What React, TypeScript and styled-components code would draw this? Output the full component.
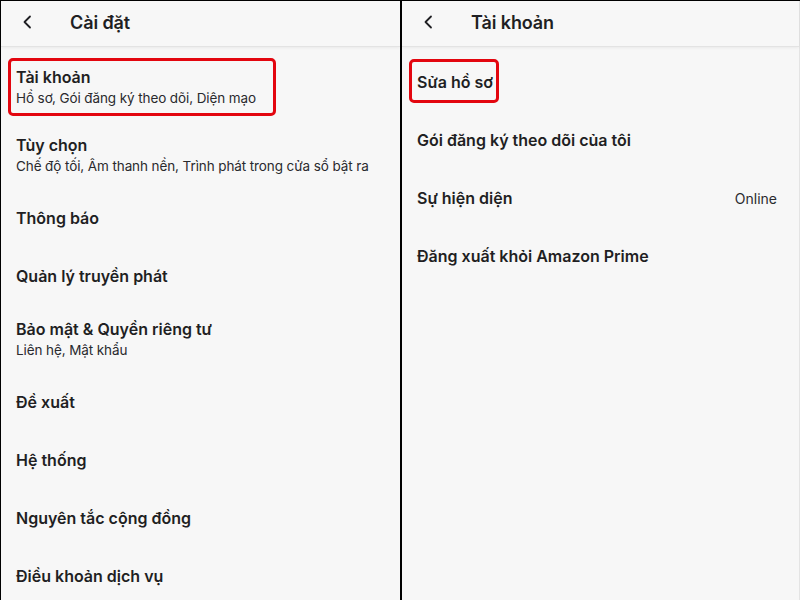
import styled, { createGlobalStyle } from 'styled-components';

const GlobalStyle = createGlobalStyle`
  html, body {
    margin: 0;
    padding: 0;
    background: #f7f7f7;
  }
  * {
    box-sizing: border-box;
  }
`;

const Frame = styled.div`
  display: grid;
  grid-template-columns: 402px 398px;
  width: 800px;
  height: 600px;
  border-top: 1px solid #000;
  background: #f7f7f7;
  font-family: Inter, "Noto Sans", sans-serif;
  color: #1f1f23;
  overflow: hidden;
`;

const Panel = styled.div<{ $left?: boolean }>`
  display: flex;
  flex-direction: column;
  min-width: 0;
  border-left: ${(p) => (p.$left ? '1px solid #000' : 'none')};
  border-right: ${(p) => (p.$left ? '2px solid #000' : '1px solid #e4e4e4')};
  border-bottom: ${(p) => (p.$left ? '2px solid #000' : 'none')};
`;

const Header = styled.div`
  height: 46px;
  flex-shrink: 0;
  display: flex;
  align-items: center;
  padding: 0 0 3px 21px;
  border-bottom: 1px solid #e3e3e3;
  box-shadow: 0 1px 3px rgba(0, 0, 0, 0.06);
`;

const Back = styled.svg`
  width: 10px;
  height: 14px;
  flex-shrink: 0;
`;

const HeaderTitle = styled.h1`
  margin: 0 0 0 38px;
  font-size: 18px;
  font-weight: 600;
  letter-spacing: -0.1px;
`;

const List = styled.div`
  display: flex;
  flex-direction: column;
  padding-top: 6px;
`;

const Item = styled.div<{ $double?: boolean }>`
  position: relative;
  height: ${(p) => (p.$double ? 68 : 58)}px;
  display: flex;
  align-items: center;
  justify-content: space-between;
  padding: 0 22px 0 15px;
`;

const Texts = styled.div`
  display: flex;
  flex-direction: column;
  min-width: 0;
`;

const Title = styled.div`
  font-size: 16px;
  font-weight: 600;
  line-height: 22px;
  white-space: nowrap;
`;

const Sub = styled.div`
  font-size: 13.5px;
  font-weight: 400;
  line-height: 20px;
  color: #2a2a2e;
  white-space: nowrap;
  letter-spacing: -0.1px;
`;

const Value = styled.div`
  font-size: 14px;
  color: #2a2a2e;
`;

const Mark = styled.div<{ $left: number; $top: number; $w: number; $h: number }>`
  position: absolute;
  left: ${(p) => p.$left}px;
  top: ${(p) => p.$top}px;
  width: ${(p) => p.$w}px;
  height: ${(p) => p.$h}px;
  border: 3px solid #e3060f;
  border-radius: 5px;
  pointer-events: none;
`;

const BackIcon = () => (
  <Back viewBox="0 0 10 14">
    <path d="M8 1.5 L2.5 7 L8 12.5" fill="none" stroke="#1f1f23" strokeWidth="1.8" strokeLinecap="round" strokeLinejoin="round" />
  </Back>
);

const settings = [
  { title: 'Tài khoản', sub: 'Hồ sơ, Gói đăng ký theo dõi, Diện mạo', mark: true },
  { title: 'Tùy chọn', sub: 'Chế độ tối, Âm thanh nền, Trình phát trong cửa sổ bật ra' },
  { title: 'Thông báo' },
  { title: 'Quản lý truyền phát' },
  { title: 'Bảo mật & Quyền riêng tư', sub: 'Liên hệ, Mật khẩu' },
  { title: 'Đề xuất' },
  { title: 'Hệ thống' },
  { title: 'Nguyên tắc cộng đồng' },
  { title: 'Điều khoản dịch vụ' },
];

const account = [
  { title: 'Sửa hồ sơ', mark: true },
  { title: 'Gói đăng ký theo dõi của tôi' },
  { title: 'Sự hiện diện', value: 'Online' },
  { title: 'Đăng xuất khỏi Amazon Prime' },
];

const App = () => {
  return (
    <>
      <GlobalStyle />
      <Frame>
        <Panel $left>
          <Header>
            <BackIcon />
            <HeaderTitle>Cài đặt</HeaderTitle>
          </Header>
          <List>
            {settings.map((s) => (
              <Item key={s.title} $double={!!s.sub}>
                <Texts>
                  <Title>{s.title}</Title>
                  {s.sub && <Sub>{s.sub}</Sub>}
                </Texts>
                {s.mark && <Mark $left={7} $top={5} $w={268} $h={58} />}
              </Item>
            ))}
          </List>
        </Panel>
        <Panel>
          <Header>
            <BackIcon />
            <HeaderTitle>Tài khoản</HeaderTitle>
          </Header>
          <List>
            {account.map((a) => (
              <Item key={a.title}>
                <Texts>
                  <Title>{a.title}</Title>
                </Texts>
                {a.value && <Value>{a.value}</Value>}
                {a.mark && <Mark $left={7} $top={6} $w={90} $h={44} />}
              </Item>
            ))}
          </List>
        </Panel>
      </Frame>
    </>
  );
};

export default App;
